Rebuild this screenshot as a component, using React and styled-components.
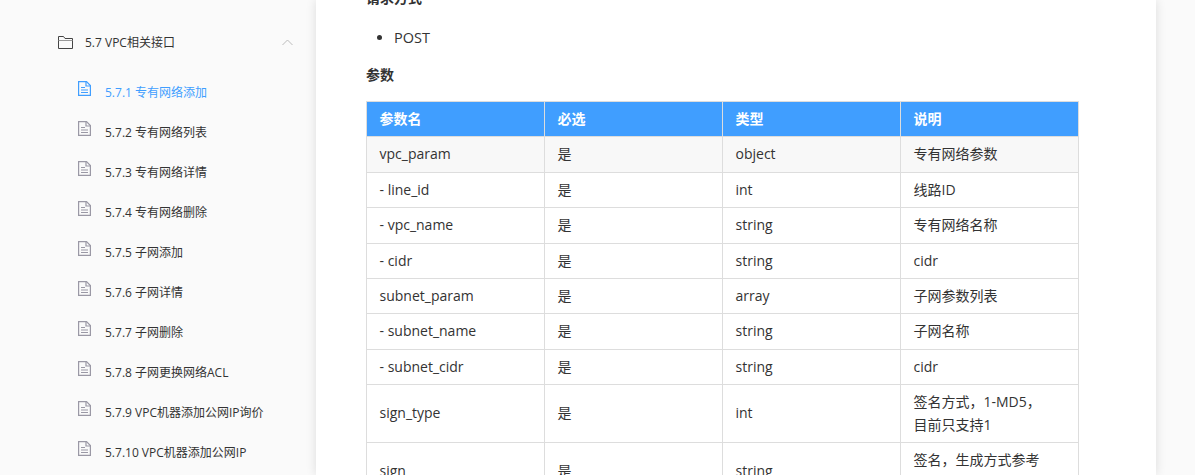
import React from "react";
import styled, { createGlobalStyle } from "styled-components";

const GlobalStyle = createGlobalStyle`
  html, body {
    margin: 0;
    padding: 0;
    height: 475px;
    overflow: hidden;
    background: #fafafa;
    font-family: "Open Sans", "Noto Sans CJK SC", sans-serif;
    color: #333;
  }
`;

const Page = styled.div`
  display: flex;
  width: 1195px;
  height: 475px;
  overflow: hidden;
`;

const Sidebar = styled.aside`
  width: 316px;
  flex-shrink: 0;
  padding: 22px 22px 0 58px;
  box-sizing: border-box;
`;

const GroupRow = styled.div`
  display: flex;
  align-items: center;
  height: 40px;
  font-size: 12px;
  color: #333;
`;

const FolderIcon = styled.svg`
  width: 15px;
  height: 13px;
  margin-right: 12px;
  flex-shrink: 0;
`;

const Chevron = styled.svg`
  width: 11px;
  height: 7px;
  margin-left: auto;
  margin-right: 1px;
`;

const DocList = styled.div`
  margin-top: 10px;
  padding-left: 20px;
`;

const DocRow = styled.div`
  display: flex;
  align-items: center;
  height: 40px;
  font-size: 12px;
  color: ${(p) => (p.$active ? "#409eff" : "#333")};
`;

const DocIcon = styled.svg`
  width: 13px;
  height: 15px;
  margin-right: 14px;
  margin-top: -7px;
  flex-shrink: 0;
`;

const Main = styled.main`
  width: 840px;
  height: 475px;
  flex-shrink: 0;
  overflow: hidden;
  background: #fff;
  box-shadow: 0 0 10px rgba(0, 0, 0, 0.12);
  padding: 0 77px 0 50px;
  box-sizing: border-box;
`;

const Heading = styled.p`
  margin: 0;
  font-size: 14px;
  font-weight: 700;
  line-height: 20px;
  color: #333;
`;

const TopHeading = styled(Heading)`
  margin-top: -12px;
`;

const Bullets = styled.ul`
  margin: 20px 0 17px;
  padding-left: 28px;
  font-size: 14.5px;
  line-height: 20px;
`;

const Table = styled.table`
  border-collapse: collapse;
  table-layout: fixed;
  width: 713px;
  margin-top: 16px;
  font-size: 14px;
  line-height: 1.6;
`;

const HeadCell = styled.th`
  background: #409eff;
  color: #fff;
  border: 1px solid #ddd;
  padding: 6px 12.5px;
  text-align: left;
  font-size: 14px;
  font-weight: 700;
`;

const Cell = styled.td`
  border: 1px solid #ddd;
  padding: 6px 12.5px;
  background: ${(p) => (p.$shaded ? "#f8f8f8" : "#fff")};
  color: #333;
`;

const docs = [
  "5.7.1 专有网络添加",
  "5.7.2 专有网络列表",
  "5.7.3 专有网络详情",
  "5.7.4 专有网络删除",
  "5.7.5 子网添加",
  "5.7.6 子网详情",
  "5.7.7 子网删除",
  "5.7.8 子网更换网络ACL",
  "5.7.9 VPC机器添加公网IP询价",
  "5.7.10 VPC机器添加公网IP",
];

const rows = [
  ["vpc_param", "是", "object", "专有网络参数"],
  ["- line_id", "是", "int", "线路ID"],
  ["- vpc_name", "是", "string", "专有网络名称"],
  ["- cidr", "是", "string", "cidr"],
  ["subnet_param", "是", "array", "子网参数列表"],
  ["- subnet_name", "是", "string", "子网名称"],
  ["- subnet_cidr", "是", "string", "cidr"],
  ["sign_type", "是", "int", <>签名方式，1-MD5，<br />目前只支持1</>],
  ["sign", "是", "string", <>签名，生成方式参考<br />签名算法</>],
];

const Doc = ({ color }) => (
  <DocIcon viewBox="0 0 13 15" fill="none">
    <path d="M.6.6h7.900l3.900 3.900v9.900H.6z" stroke={color} strokeWidth="1.200" />
    <path d="M8 .6v4.400h4.400" stroke={color} strokeWidth="1.200" />
    <path d="M3 6.500h4M3 9h7M3 11.500h7" stroke={color} />
  </DocIcon>
);

const App = () => (
  <Page>
    <GlobalStyle />
    <Sidebar>
      <GroupRow>
        <FolderIcon viewBox="0 0 15 13" fill="none">
          <path d="M.5 12.500V.5h5l1.500 2h7.500v10z" stroke="#444" />
          <path d="M.5 4.500h14" stroke="#999" />
        </FolderIcon>
        5.7 VPC相关接口
        <Chevron viewBox="0 0 11 7" fill="none">
          <path d="M.5 6L5.500 1l5 5" stroke="#bbb" />
        </Chevron>
      </GroupRow>
      <DocList>
        {docs.map((name, i) => (
          <DocRow key={name} $active={i === 0}>
            <Doc color={i === 0 ? "#409eff" : "#9a98a5"} />
            {name}
          </DocRow>
        ))}
      </DocList>
    </Sidebar>
    <Main>
      <TopHeading>请求方式</TopHeading>
      <Bullets>
        <li>POST</li>
      </Bullets>
      <Heading>参数</Heading>
      <Table>
        <thead>
          <tr>
            <HeadCell>参数名</HeadCell>
            <HeadCell>必选</HeadCell>
            <HeadCell>类型</HeadCell>
            <HeadCell>说明</HeadCell>
          </tr>
        </thead>
        <tbody>
          {rows.map((row, i) => (
            <tr key={i}>
              {row.map((text, j) => (
                <Cell key={j} $shaded={i === 0}>{text}</Cell>
              ))}
            </tr>
          ))}
        </tbody>
      </Table>
    </Main>
  </Page>
);

export default App;
